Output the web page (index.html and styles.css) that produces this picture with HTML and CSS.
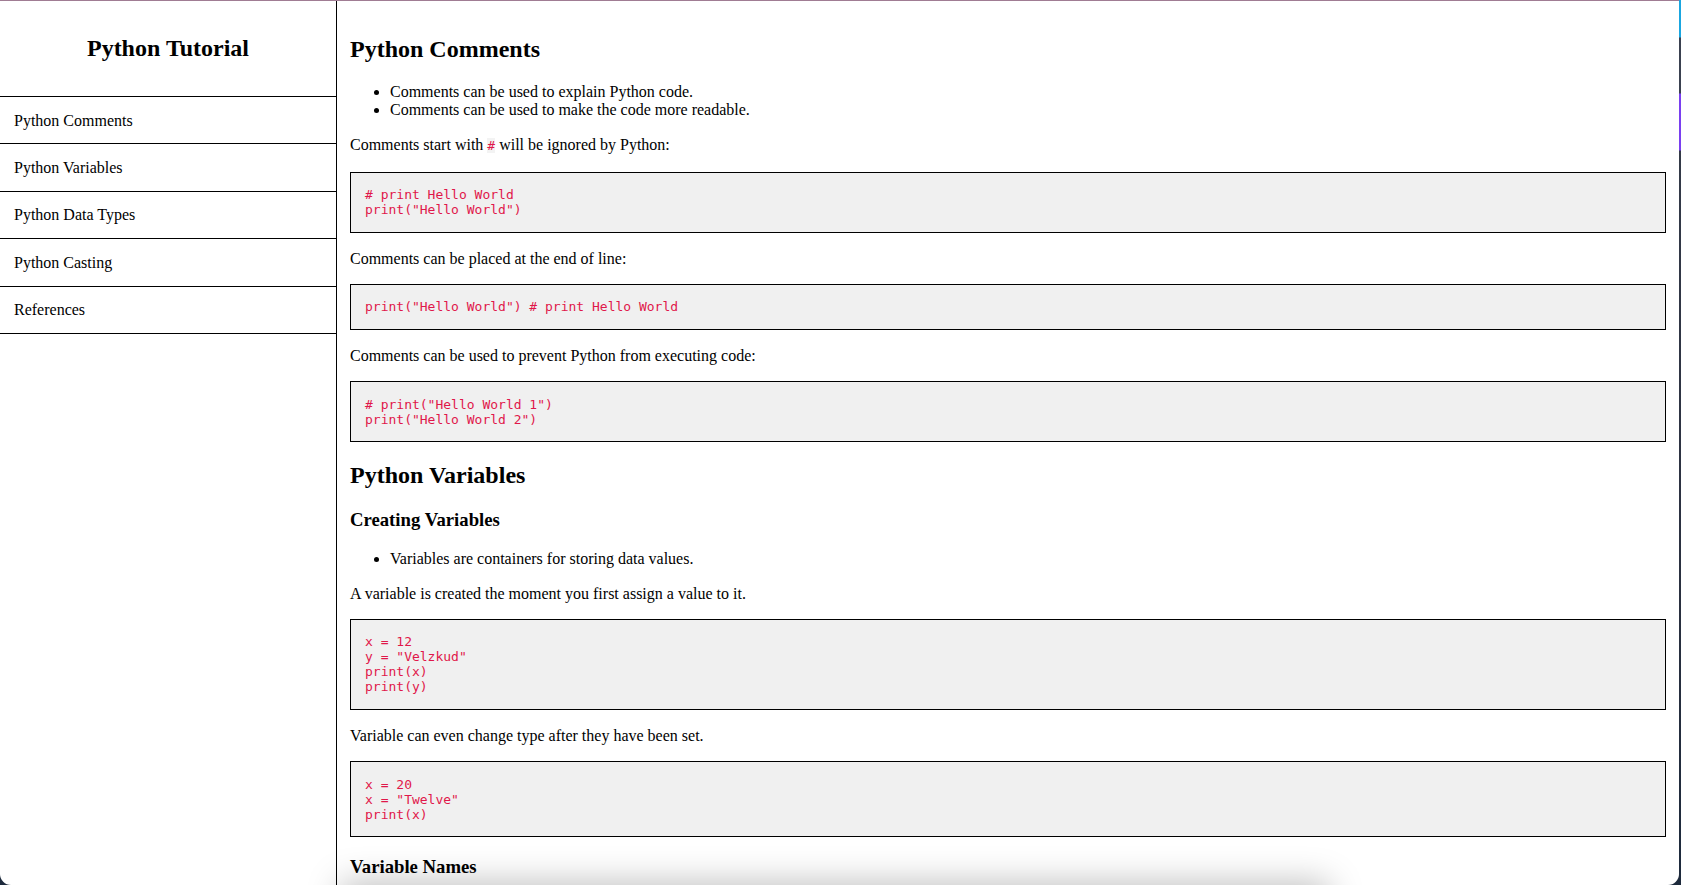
FILE: index.html
```html
<!DOCTYPE html>
<html lang="en">
<head>
<meta charset="utf-8">
<title>Python Tutorial</title>
<link rel="stylesheet" href="styles.css">
</head>
<body>
<div class="window">
  <aside class="sidebar">
    <div class="sidebar-header">
      <h2 class="sidebar-title">Python Tutorial</h2>
    </div>
    <nav class="nav">
      <a class="nav-item" href="#comments">Python Comments</a>
      <a class="nav-item" href="#variables">Python Variables</a>
      <a class="nav-item" href="#datatypes">Python Data Types</a>
      <a class="nav-item" href="#casting">Python Casting</a>
      <a class="nav-item" href="#references">References</a>
    </nav>
  </aside>
  <main class="main">
    <section class="section" id="comments">
      <h2 class="section-title">Python Comments</h2>
      <ul class="list">
        <li>Comments can be used to explain Python code.</li>
        <li>Comments can be used to make the code more readable.</li>
      </ul>
      <p class="text">Comments start with <code class="inline-code">#</code> will be ignored by Python:</p>
      <pre class="code-block"><code># print Hello World
print("Hello World")</code></pre>
      <p class="text">Comments can be placed at the end of line:</p>
      <pre class="code-block"><code>print("Hello World") # print Hello World</code></pre>
      <p class="text">Comments can be used to prevent Python from executing code:</p>
      <pre class="code-block"><code># print("Hello World 1")
print("Hello World 2")</code></pre>
    </section>
    <section class="section" id="variables">
      <h2 class="section-title">Python Variables</h2>
      <h3 class="sub-title">Creating Variables</h3>
      <ul class="list">
        <li>Variables are containers for storing data values.</li>
      </ul>
      <p class="text">A variable is created the moment you first assign a value to it.</p>
      <pre class="code-block"><code>x = 12
y = "Velzkud"
print(x)
print(y)</code></pre>
      <p class="text">Variable can even change type after they have been set.</p>
      <pre class="code-block"><code>x = 20
x = "Twelve"
print(x)</code></pre>
      <h3 class="sub-title">Variable Names</h3>
    </section>
  </main>
  <div class="bottom-shadow"></div>
</div>
</body>
</html>
```

FILE: styles.css
```css
html, body {
  margin: 0;
  padding: 0;
  height: 100%;
}

body {
  background: linear-gradient(180deg, #1aa6e0 0px, #1aa6e0 37px, #3a4150 38px, #3a4150 93px, #7a3ff0 94px, #7a3ff0 150px, #343a48 151px, #2a3040 600px, #1d2a3c 885px);
  font-family: "Liberation Serif", "Times New Roman", serif;
  font-size: 16px;
  color: #000;
  overflow: hidden;
}

.window {
  position: relative;
  width: 1679px;
  height: 885px;
  box-sizing: border-box;
  background: #fff;
  border-top: 1px solid #a07c93;
  border-radius: 0 0 11px 11px;
  overflow: hidden;
  display: flex;
}

.sidebar {
  width: 336px;
  flex: none;
  border-right: 1px solid #000;
  display: flex;
  flex-direction: column;
}

.sidebar-header {
  height: 96px;
  box-sizing: border-box;
  border-bottom: 1px solid #000;
  display: flex;
  align-items: center;
  justify-content: center;
}

.sidebar-title {
  margin: 0;
  font-size: 24px;
  font-weight: bold;
}

.nav {
  display: flex;
  flex-direction: column;
}

.nav-item {
  display: block;
  padding: 14.5px 14px;
  line-height: 17.4px;
  border-bottom: 1px solid #000;
  color: #000;
  text-decoration: none;
}

.main {
  flex: 1;
  min-width: 0;
  padding: 15px 13px 0 13px;
  overflow: hidden;
}

.section-title {
  font-size: 24px;
  line-height: 27.6px;
  margin: 19.92px 0;
}

.sub-title {
  font-size: 18.72px;
  line-height: 21.5px;
  margin: 18.72px 0;
}

.list {
  margin: 16px 0;
  padding-left: 40px;
  line-height: 18px;
}

.text {
  margin: 16px 0;
  line-height: 19.2px;
}

.inline-code {
  font-family: "DejaVu Sans Mono", "Liberation Mono", monospace;
  font-size: 13px;
  color: #e0174a;
  background: #f3f3f3;
}

.code-block {
  margin: 16px 0;
  padding: 14.5px 14px;
  background: #f0f0f0;
  border: 1px solid #000;
  font-family: "DejaVu Sans Mono", "Liberation Mono", monospace;
  font-size: 13px;
  line-height: 15px;
  color: #e0174a;
}

.bottom-shadow {
  position: absolute;
  left: 345px;
  top: 885px;
  width: 980px;
  height: 40px;
  box-shadow: 0 0 34px 4px rgba(0, 0, 0, 0.25);
  pointer-events: none;
}
```
